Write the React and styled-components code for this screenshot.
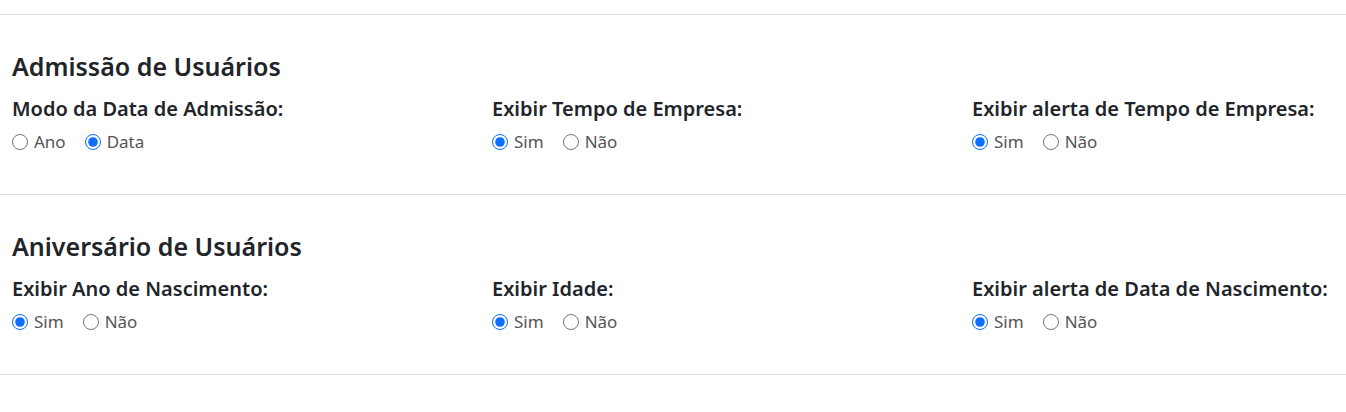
import React, { useState } from 'react'
import styled, { createGlobalStyle } from 'styled-components'

const Global = createGlobalStyle`
body {
  margin: 0;
  background: #fff;
  font-family: 'Noto Sans', 'Open Sans', sans-serif;
  color: #212529;
}
`

const Page = styled.div`
padding-top: 14px;
`

const Section = styled.section`
border-top: 1px solid #dfdde6;
padding: 37px 0 40px 12px;
&:last-child {
  border-bottom: 1px solid #dfdde6;
}
`

const Title = styled.h4`
margin: 0 0 14px 0;
font-size: 25px;
font-weight: 600;
line-height: 29px;
color: #212529;
`

const Row = styled.div`
display: grid;
grid-template-columns: 480px 480px 1fr;
`

const Field = styled.div`
display: flex;
flex-direction: column;
gap: 6px;
`

const Label = styled.div`
font-size: 20px;
font-weight: 600;
line-height: 28px;
`

const Options = styled.div`
display: flex;
gap: 19px;
`

const Option = styled.label`
display: flex;
align-items: center;
gap: 6px;
font-size: 17px;
line-height: 25px;
color: #555;
cursor: pointer;
`

const Radio = styled.input.attrs({ type: 'radio' })`
margin: 0;
width: 16px;
height: 16px;
accent-color: #0d6efd;
`

const RadioGroup = ({ name, options, initial }) => {
  const [value, setValue] = useState(initial)
  return (
    <Options>
      {options.map(o => (
        <Option key={o}>
          <Radio name={name} checked={value === o} onChange={() => setValue(o)} />
          {o}
        </Option>
      ))}
    </Options>
  )
}

const sections = [
  {
    title: 'Admissão de Usuários',
    fields: [
      { label: 'Modo da Data de Admissão:', options: ['Ano', 'Data'], initial: 'Data' },
      { label: 'Exibir Tempo de Empresa:', options: ['Sim', 'Não'], initial: 'Sim' },
      { label: 'Exibir alerta de Tempo de Empresa:', options: ['Sim', 'Não'], initial: 'Sim' },
    ],
  },
  {
    title: 'Aniversário de Usuários',
    fields: [
      { label: 'Exibir Ano de Nascimento:', options: ['Sim', 'Não'], initial: 'Sim' },
      { label: 'Exibir Idade:', options: ['Sim', 'Não'], initial: 'Sim' },
      { label: 'Exibir alerta de Data de Nascimento:', options: ['Sim', 'Não'], initial: 'Sim' },
    ],
  },
]

export default function App() {
  return (
    <>
      <Global />
      <Page>
        {sections.map((s, i) => (
          <Section key={i}>
            <Title>{s.title}</Title>
            <Row>
              {s.fields.map((f, j) => (
                <Field key={j}>
                  <Label>{f.label}</Label>
                  <RadioGroup name={`r${i}-${j}`} options={f.options} initial={f.initial} />
                </Field>
              ))}
            </Row>
          </Section>
        ))}
      </Page>
    </>
  )
}
